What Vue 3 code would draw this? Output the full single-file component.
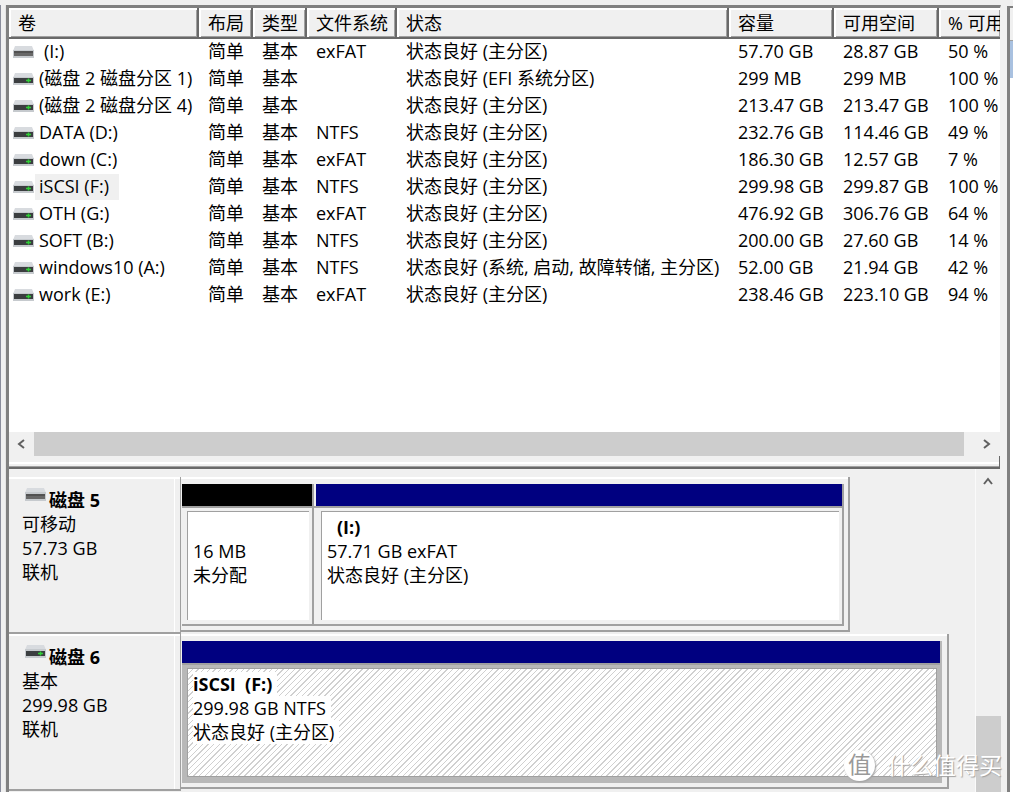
<script setup>
const columns = [
  { key: 'name', label: '卷' },
  { key: 'layout', label: '布局' },
  { key: 'type', label: '类型' },
  { key: 'fs', label: '文件系统' },
  { key: 'status', label: '状态' },
  { key: 'size', label: '容量' },
  { key: 'free', label: '可用空间' },
  { key: 'pct', label: '% 可用' },
]

const ok = '状态良好 (主分区)'
const row = (name, fs, size, free, pct, extra = {}) => ({
  name, layout: '简单', type: '基本', fs, status: ok, size, free, pct, ...extra,
})
const volumes = [
  row('(I:)', 'exFAT', '57.70 GB', '28.87 GB', '50 %', { removable: true }),
  row('(磁盘 2 磁盘分区 1)', '', '299 MB', '299 MB', '100 %', { status: '状态良好 (EFI 系统分区)' }),
  row('(磁盘 2 磁盘分区 4)', '', '213.47 GB', '213.47 GB', '100 %'),
  row('DATA (D:)', 'NTFS', '232.76 GB', '114.46 GB', '49 %'),
  row('down (C:)', 'exFAT', '186.30 GB', '12.57 GB', '7 %'),
  row('iSCSI (F:)', 'NTFS', '299.98 GB', '299.87 GB', '100 %', { selected: true }),
  row('OTH (G:)', 'exFAT', '476.92 GB', '306.76 GB', '64 %'),
  row('SOFT (B:)', 'NTFS', '200.00 GB', '27.60 GB', '14 %'),
  row('windows10 (A:)', 'NTFS', '52.00 GB', '21.94 GB', '42 %', { status: '状态良好 (系统, 启动, 故障转储, 主分区)' }),
  row('work (E:)', 'exFAT', '238.46 GB', '223.10 GB', '94 %'),
]

const disks = [
  {
    title: '磁盘 5', kind: '可移动', size: '57.73 GB', state: '联机', removable: true, extent: 'short',
    parts: [
      { cls: 'unallocated', name: '', size: '16 MB', status: '未分配' },
      { cls: 'primary indented', name: '(I:)', size: '57.71 GB exFAT', status: ok },
    ],
  },
  {
    title: '磁盘 6', kind: '基本', size: '299.98 GB', state: '联机', removable: false, extent: 'long',
    parts: [{ cls: 'primary chosen', name: 'iSCSI\u00a0 (F:)', size: '299.98 GB NTFS', status: ok }],
  },
]
</script>

<template>
  <div class="window">
    <div class="edge"></div>
    <main class="console">
      <section class="volumes">
        <div class="table-wrap">
          <table>
            <colgroup><col v-for="c in columns" :key="c.key" :class="'c-' + c.key" /></colgroup>
            <thead>
              <tr><th v-for="c in columns" :key="c.key" scope="col"><span>{{ c.label }}</span></th></tr>
            </thead>
            <tbody>
              <tr v-for="v in volumes" :key="v.name">
                <td v-for="c in columns" :key="c.key">
                  <div v-if="c.key === 'name'" class="vol">
                    <svg class="drive" viewBox="0 0 21 13" aria-hidden="true">
                      <path d="M2 0H19L21 5H0Z" fill="#d8dbdf" />
                      <path d="M0 4H21V12H0Z" fill="#c6cace" />
                      <path d="M1 5H20V10H1Z" :fill="v.removable ? '#686868' : '#3b3e40'" />
                      <path v-if="v.removable" d="M1 5H20V7H1Z" fill="#525252" />
                      <path v-else d="M13 7.500H18M15.500 5.500V9.500" stroke="#2fcf35" stroke-width="1.500" />
                    </svg>
                    <span :class="{ selected: v.selected, bare: v.removable }">{{ v.name }}</span>
                  </div>
                  <template v-else>{{ v[c.key] }}</template>
                </td>
              </tr>
            </tbody>
          </table>
        </div>
        <div class="hscroll">
          <button type="button" aria-label="向左滚动"><svg viewBox="0 0 8 10"><path d="M7 1L2 5L7 9" /></svg></button>
          <div class="track"><div class="thumb"></div></div>
          <button type="button" aria-label="向右滚动"><svg viewBox="0 0 8 10"><path d="M1 1L6 5L1 9" /></svg></button>
        </div>
        <div class="splitter"></div>
      </section>

      <section class="lower">
        <div class="disks">
          <article v-for="d in disks" :key="d.title" class="disk">
            <div class="info">
              <h2>
                <svg class="drive" viewBox="0 0 21 13" aria-hidden="true">
                  <path d="M2 0H19L21 5H0Z" fill="#d8dbdf" />
                  <path d="M0 4H21V13H0Z" fill="#c6cace" />
                  <path d="M1 6H20V11H1Z" :fill="d.removable ? '#686868' : '#3b3e40'" />
                  <path v-if="d.removable" d="M1 6H20V8H1Z" fill="#525252" />
                  <path v-else d="M13 8.500H18M15.500 6.500V10.500" stroke="#2fcf35" stroke-width="1.500" />
                </svg>
                <span>{{ d.title }}</span>
              </h2>
              <p>{{ d.kind }}</p>
              <p>{{ d.size }}</p>
              <p>{{ d.state }}</p>
            </div>
            <div class="lane">
              <div class="frame" :class="d.extent">
                <div v-for="p in d.parts" :key="p.size" class="part" :class="p.cls">
                  <div class="bar"></div>
                  <div class="body">
                    <div class="box">
                      <p class="name"><span>{{ p.name }}</span></p>
                      <p><span>{{ p.size }}</span></p>
                      <p><span>{{ p.status }}</span></p>
                    </div>
                  </div>
                </div>
              </div>
            </div>
          </article>
        </div>
        <div class="vscroll">
          <button type="button" aria-label="向上滚动"><svg viewBox="0 0 10 8"><path d="M1 7L5 2L9 7" /></svg></button>
          <div class="vspace"></div>
          <div class="vthumb"></div>
        </div>
      </section>
    </main>
    <aside class="side"><div class="side-head"></div><div class="side-item"></div></aside>
    <div class="mark"><span class="seal">值</span><span class="brand">什么值得买</span></div>
  </div>
</template>

<style>
body { background: #f0f0f0; }
</style>

<style scoped>
* { box-sizing: border-box; }
.window {
  position: relative; display: flex; height: 100vh; padding-top: 5px; overflow: hidden;
  background: #f0f0f0; color: #000;
  font: 18px/24px "Open Sans", "Noto Sans CJK SC", sans-serif;
}
.edge { flex: 0 0 6px; border-left: 1px solid #8a8d9c; border-right: 1px solid #e4e4e4; background: #f0f0f0; }
.console {
  flex: 1; min-width: 0; display: flex; flex-direction: column;
  border-left: 3px solid #808080;
}
.volumes { flex: none; display: flex; flex-direction: column; margin-right: 6px; background: #fff; border-top: 3px solid #808080; border-right: 1px solid #f0f0f0; }
.table-wrap { height: 424px; overflow: hidden; }
table { width: 100%; table-layout: fixed; border-collapse: separate; border-spacing: 0; }
.c-name { width: 190px; }
.c-layout, .c-type { width: 54px; }
.c-fs { width: 90px; }
.c-size, .c-free { width: 105px; }
.c-pct { width: 61px; }
th {
  height: 31px; padding: 0 0 0 9px; text-align: left; font-weight: 400; line-height: 28px; white-space: nowrap; overflow: hidden;
  background: #f0f0f0; border-right: 2px solid #696969; border-bottom: 2px solid #696969;
  box-shadow: inset 2px 2px #fff, inset -1px -1px #a0a0a0;
}
th:last-child { border-right: 0; }
td { height: 27px; padding: 0 0 3px 9px; line-height: 24px; white-space: nowrap; overflow: hidden; }
td:first-child { padding: 0 0 1px 4px; }
.vol { display: flex; align-items: center; gap: 1px; }
.vol span { padding: 0 10px 2px 4px; }
.vol .bare { padding-left: 9px; }
.vol .selected { background: #f0f0f0; }
.drive { flex: none; width: 21px; height: 13px; }
.hscroll { display: flex; height: 24px; background: #f0f0f0; }
button { display: grid; place-items: center; flex: none; width: 24px; height: 24px; padding: 0; border: 0; background: none; }
.hscroll button { width: 25px; padding-right: 2px; }
button svg { width: 8px; height: 10px; fill: none; stroke: #606060; stroke-width: 2; }
.track { flex: 1; padding-right: 11px; }
.thumb { height: 100%; background: #cdcdcd; }
.splitter {
  height: 13px; background: #f0f0f0; border: solid #696969; border-width: 0 1px 2px 0;
  box-shadow: inset 0 -1px #a0a0a0;
}
.splitter::before { content: ""; display: block; height: 6px; border-bottom: 2px solid #fff; }
.lower { flex: 1; min-height: 0; display: flex; margin-right: 6px; overflow: hidden; }
.disks { flex: 1; min-width: 0; padding-top: 8px; }
.disk { display: flex; height: 157px; }
.info {
  flex: 0 0 171px; padding: 9px 0 0 13px; border-top: 2px solid #fff; border-bottom: 2px solid #a0a0a0;
  box-shadow: inset -5px 0 #f0f0f0, inset -6px 0 #fff;
}
h2, p { margin: 0; white-space: nowrap; }
h2 { display: flex; gap: 3px; padding-left: 3px; font-size: 18px; line-height: 24px; font-weight: 700; }
p { line-height: 24px; height: 24px; }
.lane { flex: 1; min-width: 0; border-left: 1px solid #a0a0a0; }
.frame { display: flex; height: 155px; padding: 7px 4px 4px 1px; border: solid #a0a0a0; border-width: 0 2px 2px 0; box-shadow: inset 0 2px #fff; }
.short { width: 84.2%; }
.long { width: 96.7%; padding-right: 5px; }
.part { flex: 1; min-width: 0; display: flex; flex-direction: column; border-right: 2px solid #a0a0a0; border-bottom: 2px solid #a0a0a0; }
.unallocated { flex: 0 0 132px; }
.bar { height: 22px; background: #000080; }
.unallocated .bar { background: #000; }
.part + .part .bar { margin-left: 2px; }
.body { flex: 1; padding: 3px 3px 4px 5px; border-top: 2px solid #a0a0a0; }
.part + .part .body { padding-left: 7px; }
.box { height: 100%; padding: 3px 0 0 5px; border-left: 1px solid #a0a0a0; border-top: 1px solid #a0a0a0; background: #fff; }
.name { font-weight: 700; }
.indented .name { padding-left: 10px; }
.chosen { border-right-color: #b8b8b8; border-bottom-color: #b8b8b8; }
.chosen .body { background: #b8b8b8; }
.chosen .box {
  border: 1px solid #a0a0a0;
  background: repeating-linear-gradient(135deg, #fff 0 3px, #d0d0d0 3px 4px);
}
.chosen .box span { display: inline-block; padding-right: 5px; background: #fff; }
.vscroll { flex: 0 0 26px; display: flex; flex-direction: column; border-left: 1px solid #fafafa; }
.vscroll button svg { width: 10px; height: 8px; }
.vspace { flex: 1; }
.vthumb { height: 76px; background: #cdcdcd; }
.side { flex: 0 0 6px; margin-top: 1px; border-left: 3px solid #808080; background: #fff; }
.side-head { height: 35px; border-top: 2px solid #808080; border-bottom: 1px solid #a0a0a0; background: #f0f0f0; }
.side-item { height: 37px; background: #a9c1e0; }
.mark {
  position: absolute; left: 844px; bottom: 9px; display: flex; align-items: center; gap: 12px;
  color: #fff; font-size: 23px; line-height: 36px; white-space: nowrap;
}
.brand { text-shadow: 1px 1px 1px #a0a0a0; }
.seal { width: 31px; height: 31px; border-radius: 50%; background: #fff; color: #999; text-align: center; line-height: 29px; box-shadow: 1px 1px 2px #a0a0a0; }
</style>
